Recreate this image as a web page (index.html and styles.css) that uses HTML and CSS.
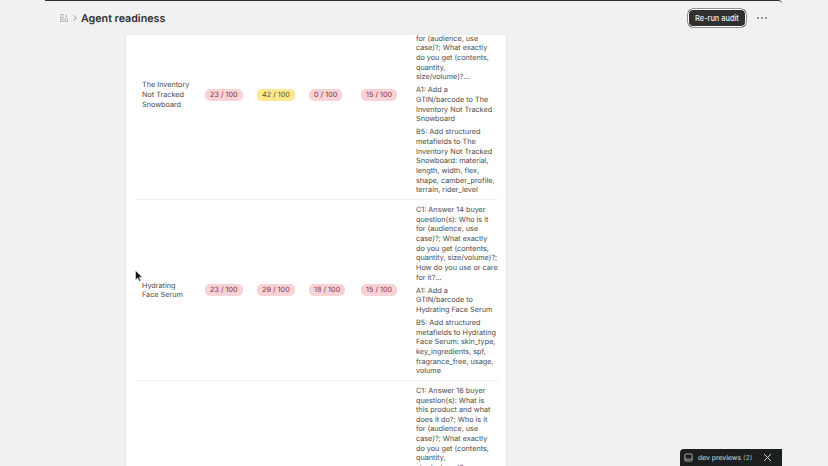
FILE: index.html
```html
<!DOCTYPE html>
<html lang="en">
<head>
  <meta charset="UTF-8" />
  <meta name="viewport" content="width=device-width, initial-scale=1.0"/>
  <title>Agent readiness</title>
  <link rel="stylesheet" href="styles.css">
</head>
<body>
  <div class="frame">
    <header class="topbar">
      <div class="crumbs">
        <span class="crumb-icon">
          <svg width="8" height="8" viewBox="0 0 8 8" fill="none" stroke="#a8a8a8" stroke-width="0.8">
            <rect x="0.5" y="0.5" width="2.6" height="3"/>
            <rect x="0.5" y="5" width="2.6" height="2.6"/>
            <rect x="5" y="5" width="2.6" height="2.6"/>
            <path d="M5 1h2.5M5 2.8h2.5"/>
          </svg>
        </span>
        <svg class="chevron" width="6" height="8" viewBox="0 0 6 8" fill="none" stroke="#8a8a8a" stroke-width="0.9">
          <path d="M1.5 1.2 4.3 4 1.5 6.8"/>
        </svg>
        <h1>Agent readiness</h1>
      </div>
      <div class="actions">
        <button class="rerun-btn">Re-run audit</button>
        <span class="more"><i></i><i></i><i></i></span>
      </div>
    </header>

    <main class="content">
      <section class="card">
        <table class="audit">
          <colgroup>
            <col class="col-name"><col class="col-score"><col class="col-score"><col class="col-score"><col class="col-last"><col class="col-fix">
          </colgroup>
          <tbody>
            <tr>
              <td class="name">The Inventory Not Tracked Snowboard</td>
              <td><span class="pill">23 / 100</span></td>
              <td><span class="pill pill-warn">42 / 100</span></td>
              <td><span class="pill">0 / 100</span></td>
              <td><span class="pill">15 / 100</span></td>
              <td class="fixes">
                <p>C1: Answer 15 buyer question(s): What is this product and what does it do?; Who is it for (audience, use case)?; What exactly do you get (contents, quantity, size/volume)?...</p>
                <p>A1: Add a GTIN/barcode to The Inventory Not Tracked Snowboard</p>
                <p>B5: Add structured metafields to The Inventory Not Tracked Snowboard: material, length, width, flex, shape, camber_profile, terrain, rider_level</p>
              </td>
            </tr>
            <tr>
              <td class="name">Hydrating Face Serum</td>
              <td><span class="pill">23 / 100</span></td>
              <td><span class="pill">29 / 100</span></td>
              <td><span class="pill">18 / 100</span></td>
              <td><span class="pill">15 / 100</span></td>
              <td class="fixes">
                <p>C1: Answer 14 buyer question(s): Who is it for (audience, use case)?; What exactly do you get (contents, quantity, size/volume)?; How do you use or care for it?...</p>
                <p>A1: Add a GTIN/barcode to Hydrating Face Serum</p>
                <p>B5: Add structured metafields to Hydrating Face Serum: skin_type, key_ingredients, spf, fragrance_free, usage, volume</p>
              </td>
            </tr>
            <tr>
              <td class="name"></td>
              <td></td>
              <td></td>
              <td></td>
              <td></td>
              <td class="fixes">
                <p>C1: Answer 16 buyer question(s): What is this product and what does it do?; Who is it for (audience, use case)?; What exactly do you get (contents, quantity, size/volume)?...</p>
              </td>
            </tr>
          </tbody>
        </table>
      </section>
    </main>

    <div class="dev-bar">
      <svg width="9" height="9" viewBox="0 0 9 9" fill="none" stroke="#c4c4c4" stroke-width="0.8">
        <rect x="0.9" y="0.9" width="7.2" height="7.2" rx="1.2"/>
        <path d="M0.9 6.2h7.2"/>
      </svg>
      <span class="dev-label">dev previews <span class="dev-count">(2)</span></span>
      <svg class="dev-close" width="9" height="9" viewBox="0 0 9 9" fill="none" stroke="#d8d8d8" stroke-width="1">
        <path d="M1.2 1.2 7.8 7.8M7.8 1.2 1.2 7.8"/>
      </svg>
    </div>
  </div>

  <svg class="cursor" width="8" height="12" viewBox="0 0 8 12">
    <path d="M0.5 0.5v9.4l2.2-2 1.5 3.4 1.5-.7-1.5-3.3h3z" fill="#111" stroke="#fff" stroke-width="0.5"/>
  </svg>
</body>
</html>
```

FILE: styles.css
```css
* {
  margin: 0;
  padding: 0;
  box-sizing: border-box;
}

html, body {
  height: 100%;
  overflow: hidden;
}

body {
  font-family: Inter, 'Noto Sans', sans-serif;
  text-rendering: geometricPrecision;
  background-color: #f1f1f1;
  color: #4a4a4a;
  padding: 0 46px 0 45px;
}

.frame {
  height: 100%;
  display: flex;
  flex-direction: column;
  border-top: 1px solid #303030;
  border-top-right-radius: 4px;
  position: relative;
}

.topbar {
  height: 34px;
  flex-shrink: 0;
  display: flex;
  align-items: center;
  justify-content: space-between;
  padding: 1px 14px 0 13px;
  border-bottom: 1px solid #ededed;
}

.crumbs {
  display: flex;
  align-items: center;
}

.crumb-icon {
  width: 12px;
  height: 12px;
  border-radius: 3px;
  background-color: #f7f7f7;
  display: flex;
  align-items: center;
  justify-content: center;
}

.chevron {
  margin: 0 3px 0 2px;
}

h1 {
  font-size: 10.7px;
  font-weight: 600;
  color: #303030;
}

.actions {
  display: flex;
  align-items: center;
  gap: 11px;
}

.rerun-btn {
  width: 58px;
  height: 18px;
  border: 1px solid #ffffff;
  border-radius: 5px;
  background-color: #303030;
  color: #f2f2f2;
  font-family: inherit;
  font-size: 7.4px;
  font-weight: 500;
  box-shadow: 0 0 0 0.5px #303030;
}

.more {
  width: 10px;
  display: flex;
  justify-content: space-between;
  margin-right: 1px;
}

.more i {
  width: 2px;
  height: 2px;
  border-radius: 50%;
  background-color: #707070;
}

.content {
  flex: 1;
  min-height: 0;
  overflow: hidden;
  padding-left: 80px;
}

.card {
  width: 382px;
  height: 100%;
  overflow: hidden;
  background-color: #ffffff;
  border-left: 1px solid #e6e6e6;
  border-right: 1px solid #e6e6e6;
  padding: 0 9px;
}

.audit {
  width: 363px;
  margin-top: -45px;
  table-layout: fixed;
  border-collapse: collapse;
  font-size: 7.25px;
  line-height: 9.65px;
}

.col-name { width: 63px; }
.col-score { width: 52px; }
.col-last { width: 55px; }
.col-fix { width: 89px; }

.audit tr {
  border-bottom: 1px solid #f1f1f1;
}

.audit td {
  padding: 5px 0 4px 7px;
  vertical-align: middle;
}

.audit .name {
  padding-right: 6px;
}

.fixes p + p {
  margin-top: 3.4px;
}

.pill {
  display: inline-block;
  height: 12px;
  line-height: 12px;
  padding: 0 5px;
  border-radius: 5px;
  white-space: nowrap;
  background-color: #f7d2d6;
  color: #8e2f3a;
}

.pill-warn {
  background-color: #fbe98f;
  color: #6d4a10;
}

.dev-bar {
  position: absolute;
  right: 0;
  bottom: 0;
  width: 102px;
  height: 17px;
  display: flex;
  align-items: center;
  padding: 0 10px 0 4px;
  background-color: #1c1f20;
  border-top-left-radius: 4px;
  color: #c9c9c9;
  font-size: 6.8px;
}

.dev-label {
  margin-left: 5px;
  font-weight: 500;
}

.dev-count {
  color: #9a9a9a;
}

.dev-close {
  margin-left: auto;
}

.cursor {
  position: absolute;
  left: 135px;
  top: 270px;
}
```
